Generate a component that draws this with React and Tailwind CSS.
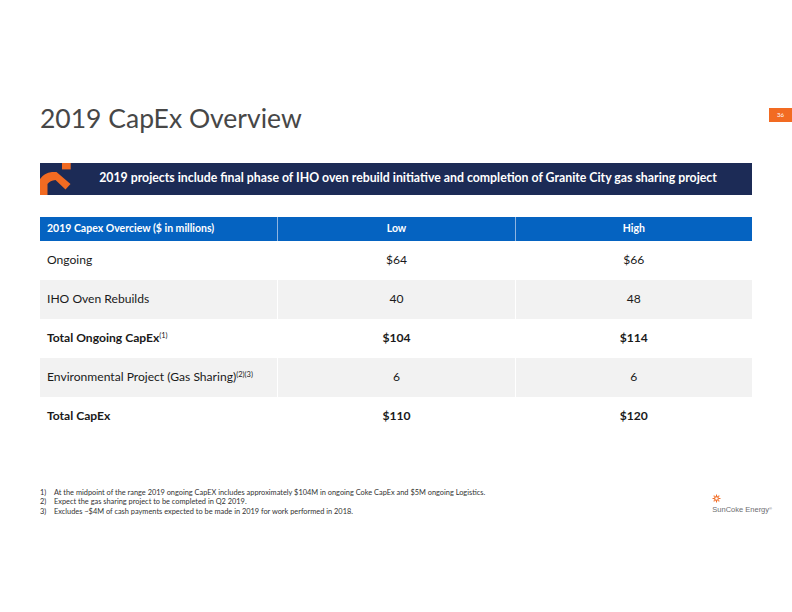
import React from "react";

const rows = [
  { label: "Ongoing", low: "$64", high: "$66", bold: false, gray: false },
  { label: "IHO Oven Rebuilds", low: "40", high: "48", bold: false, gray: true },
  { label: "Total Ongoing CapEx", sup: "(1)", low: "$104", high: "$114", bold: true, gray: false },
  { label: "Environmental Project (Gas Sharing)", sup: "(2)(3)", low: "6", high: "6", bold: false, gray: true },
  { label: "Total CapEx", low: "$110", high: "$120", bold: true, gray: false },
];

function BannerMark() {
  return (
    <svg width="31" height="32" viewBox="0 0 31 32" className="shrink-0">
      <rect x="22" y="0" width="8.7" height="6.4" fill="#f26b22" />
      <path
        d="M0 32 L0 16 Q4 10 12 9 L16.5 9 L30.5 21 L25.5 26.5 L15.5 17 Q10 17.5 7.5 21 L7.5 32 Z"
        fill="#f26b22"
      />
    </svg>
  );
}

function SunIcon() {
  const rays = [0, 45, 90, 135, 180, 225, 270, 315];
  return (
    <svg width="9" height="9" viewBox="0 0 10 10">
      <circle cx="5" cy="5" r="2.1" fill="none" stroke="#f26b22" strokeWidth="1.2" />
      {rays.map((a) => (
        <line
          key={a}
          x1="5"
          y1="0.6"
          x2="5"
          y2="2.2"
          stroke="#f26b22"
          strokeWidth="1.2"
          transform={`rotate(${a} 5 5)`}
        />
      ))}
    </svg>
  );
}

export default function App() {
  return (
    <div className="w-[792px] h-[612px] bg-white overflow-hidden flex flex-col font-['Lato',sans-serif]">
      {/* Title row */}
      <div className="flex items-start justify-between pt-[105px] pl-10">
        <h1 className="text-[26.5px] leading-none font-normal text-[#474747]">2019 CapEx Overview</h1>
        <div className="mt-[3px] w-[23px] h-[14px] bg-[#f26b22] flex items-center pl-[8px]">
          <span className="text-[6px] leading-none text-white">36</span>
        </div>
      </div>

      {/* Banner */}
      <div className="mx-10 mt-[31px] h-[32px] bg-[#1c2b56] flex items-stretch">
        <BannerMark />
        <div className="flex-1 flex items-center justify-center pr-[7px]">
          <span className="text-[12.3px] font-bold text-white whitespace-nowrap">
            2019 projects include final phase of IHO oven rebuild initiative and completion of Granite City gas sharing project
          </span>
        </div>
      </div>

      {/* Table */}
      <div className="mx-10 mt-[22px] flex flex-col">
        <div className="grid grid-cols-3 h-[24px] bg-[#0563c1] text-white text-[10.5px] font-bold">
          <div className="flex items-center pl-[7px]">2019 Capex Overciew ($ in millions)</div>
          <div className="flex items-center justify-center border-l border-[#8fb4e0]">Low</div>
          <div className="flex items-center justify-center border-l border-[#8fb4e0]">High</div>
        </div>
        {rows.map((r) => (
          <div
            key={r.label}
            className={`grid grid-cols-3 h-[39px] text-[12.1px] text-[#1a1a1a] ${r.gray ? "bg-[#f2f2f2]" : "bg-white"} ${r.bold ? "font-bold" : "font-normal"}`}
          >
            <div className="flex items-center pl-[7px] whitespace-nowrap">
              <span>
                {r.label}
                {r.sup && <sup className="text-[7.5px] font-normal relative -top-[4px] align-baseline">{r.sup}</sup>}
              </span>
            </div>
            <div className="flex items-center justify-center border-l border-white">{r.low}</div>
            <div className="flex items-center justify-center border-l border-white">{r.high}</div>
          </div>
        ))}
      </div>

      {/* Footer */}
      <div className="mt-[52px] flex items-start justify-between pl-10 pr-[20px]">
        <div className="flex flex-col text-[7.4px] leading-[9.5px] text-[#333333]">
          <div className="flex">
            <span className="w-[14px]">1)</span>
            <span>At the midpoint of the range 2019 ongoing CapEX includes approximately $104M in ongoing Coke CapEx and $5M ongoing Logistics.</span>
          </div>
          <div className="flex">
            <span className="w-[14px]">2)</span>
            <span>Expect the gas sharing project to be completed in Q2 2019.</span>
          </div>
          <div className="flex">
            <span className="w-[14px]">3)</span>
            <span>Excludes ~$4M of cash payments expected to be made in 2019 for work performed in 2018.</span>
          </div>
        </div>
        <div className="mt-[6px] flex flex-col items-start">
          <SunIcon />
          <div className="mt-[3px] text-[7.5px] leading-none text-[#6d6e71] font-['Liberation_Sans',sans-serif] whitespace-nowrap">
            SunCoke Energy<sup className="text-[4px]">®</sup>
          </div>
        </div>
      </div>
    </div>
  );
}
